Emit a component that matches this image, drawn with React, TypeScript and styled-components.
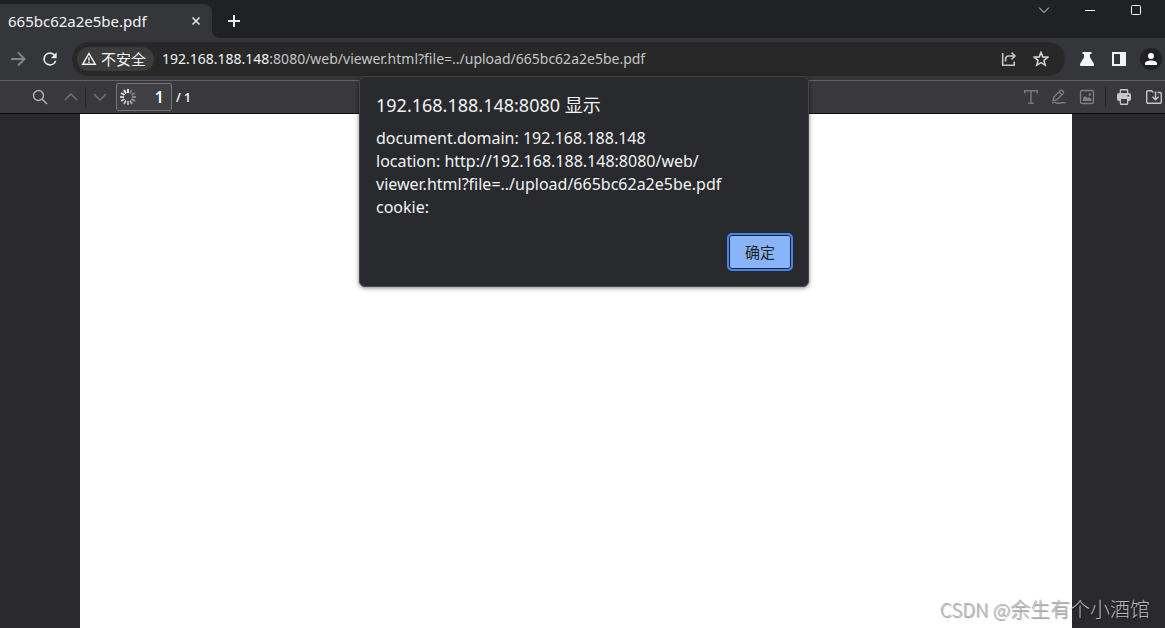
import React from "react";
import styled, { createGlobalStyle } from "styled-components";

const GlobalStyle = createGlobalStyle`
  *, *::before, *::after { box-sizing: border-box; }
  html, body, #root { height: 100%; }
  body {
    margin: 0;
    overflow: hidden;
    background: #2a2a2e;
    color: #f1f3f4;
    font-family: "Noto Sans", "Noto Sans CJK SC", sans-serif;
  }
  button, input { font: inherit; color: inherit; }
  button { border: 0; padding: 0; background: none; }
  svg { display: block; }
`;

const Browser = styled.div`
  position: relative;
  display: flex;
  flex-direction: column;
  min-height: 100%;
`;

const TabStrip = styled.header`
  display: flex;
  height: 38px;
  padding-right: 6px;
  background: #202124;
`;

const Tab = styled.div`
  position: relative;
  display: flex;
  align-items: center;
  justify-content: space-between;
  width: 212px;
  margin-top: 4px;
  padding: 0 8px;
  background: #35363a;
  border-radius: 0 8px 0 0;
  font-size: 15px;

  &::after {
    content: "";
    position: absolute;
    left: 100%;
    bottom: 0;
    width: 8px;
    height: 8px;
    background: radial-gradient(circle at 100% 0, #202124 8px, #35363a 8px);
  }
`;

const IconButton = styled.button<{ $w?: number; $h?: number; $color?: string }>`
  display: flex;
  flex: none;
  align-items: center;
  justify-content: center;
  width: ${(p) => p.$w ?? 28}px;
  height: ${(p) => p.$h ?? 28}px;
  color: ${(p) => p.$color ?? "#e8eaed"};
`;

const NewTab = styled(IconButton)`
  margin: 7px 0 0 8px;
`;

const WindowControls = styled.div`
  display: flex;
  margin-left: auto;
`;

const AddressBar = styled.div`
  display: flex;
  align-items: center;
  height: 42px;
  padding: 0 3px 0 4px;
  background: #35363a;
`;

const Omnibox = styled.div`
  display: flex;
  flex: 1;
  align-items: center;
  min-width: 0;
  height: 34px;
  margin: 0 11px 0 4px;
  padding: 0 8px 0 5px;
  background: #282828;
  border-radius: 17px;
`;

const SecurityChip = styled.button`
  display: flex;
  flex: none;
  align-items: center;
  gap: 4px;
  width: 77px;
  height: 24px;
  padding-left: 4px;
  border-radius: 12px;
  background: #3c3c3c;
  font-size: 15px;
  line-height: 24px;
  white-space: nowrap;
`;

const Url = styled.div`
  flex: 1;
  min-width: 0;
  margin-left: 8px;
  overflow: hidden;
  color: #c3c5c8;
  font-size: 14px;
  line-height: 24px;
  white-space: nowrap;
`;

const UrlHost = styled.span`
  color: #f1f3f4;
`;

const Extensions = styled.div`
  display: flex;
  gap: 10px;
`;

const Avatar = styled(IconButton)`
  border-radius: 50%;
  background: #202124;
`;

const PdfToolbar = styled.div`
  display: flex;
  align-items: center;
  justify-content: space-between;
  height: 34px;
  padding-left: 26px;
  border-top: 1px solid #606164;
  border-bottom: 1px solid #0c0c0d;
  background: #38383d;
`;

const ToolGroup = styled.div`
  display: flex;
  align-items: center;
`;

const Separator = styled.span<{ $gap?: number }>`
  width: 1px;
  height: 20px;
  margin: 0 ${(p) => p.$gap ?? 0}px;
  background: #242428;
`;

const PageField = styled.label`
  position: relative;
  display: block;
  margin: 0 4px 0 2px;
`;

const PageInput = styled.input`
  display: block;
  width: 56px;
  height: 28px;
  padding: 0 7px;
  border: 1px solid #737377;
  border-radius: 2px;
  background: #404045;
  color: #f9f9fa;
  font-size: 16px;
  font-weight: 600;
  text-align: right;
`;

const Loading = styled.span`
  position: absolute;
  top: 6px;
  left: 4px;
`;

const PageCount = styled.span`
  font-size: 12px;
  font-weight: 600;
`;

const Viewer = styled.main`
  display: flex;
  flex: 1;
  padding: 0 93px 0 80px;
  background: #2a2a2e;
`;

const Page = styled.div`
  flex: 1;
  background: #fff;
`;

const Overlay = styled.div`
  position: absolute;
  top: 76px;
  left: 3px;
  right: 0;
  display: flex;
  justify-content: center;
`;

const Dialog = styled.section`
  display: flex;
  flex-direction: column;
  width: 450px;
  padding: 16px 15px 15px 16px;
  border: 1px solid #454649;
  border-radius: 6px;
  background: #292a2d;
  box-shadow: 0 1px 4px rgba(0, 0, 0, 0.5);
`;

const DialogTitle = styled.h1`
  margin: 0 0 10px;
  font-size: 18px;
  font-weight: 400;
  line-height: 24px;
`;

const DialogText = styled.p`
  margin: 0 0 14px;
  font-size: 16px;
  line-height: 23px;
`;

const OkButton = styled.button`
  align-self: flex-end;
  width: 66px;
  height: 38px;
  padding-bottom: 2px;
  border: 2px solid #4285f4;
  border-radius: 5px;
  background: #8ab4f8;
  box-shadow: inset 0 0 0 1px #202124;
  color: #202124;
  font-size: 15px;
`;

const Watermark = styled.div`
  position: absolute;
  right: 15px;
  bottom: 4px;
  color: #b8b8b8;
  font-family: "Noto Sans CJK SC", sans-serif;
  font-size: 20px;
  font-weight: 300;
  line-height: 30px;
  text-shadow: 1px 1px 1px rgba(0, 0, 0, 0.4);
  white-space: nowrap;
`;

const WatermarkBrand = styled.span`
  font-size: 19px;
`;

const SaveButton = styled(IconButton)`
  margin-left: 5px;
`;

type IconProps = { size?: number; children: React.ReactNode; box?: number; width?: number };

const Stroke = ({ size = 16, box = 16, width = 1, children }: IconProps) => (
  <svg width={size} height={size} viewBox={`0 0 ${box} ${box}`} fill="none" stroke="currentColor" strokeWidth={width} aria-hidden="true">
    {children}
  </svg>
);

const spokes = Array.from({ length: 12 }, (_, i) => i);

export default function App() {
  return (
    <>
      <GlobalStyle />
      <Browser>
        <TabStrip>
          <Tab>
            <span>665bc62a2e5be.pdf</span>
            <IconButton $w={16} $h={16} aria-label="Close tab">
              <Stroke width={1.5}><path d="M4.5 4.5l7 7M11.5 4.5l-7 7" /></Stroke>
            </IconButton>
          </Tab>
          <NewTab aria-label="New tab">
            <Stroke width={2}><path d="M8 2v12M2 8h12" /></Stroke>
          </NewTab>
          <WindowControls>
            <IconButton $w={46} $h={20} aria-label="Search tabs">
              <Stroke><path d="M3 5.5l5 5 5-5" /></Stroke>
            </IconButton>
            <IconButton $w={46} $h={20} $color="#fff" aria-label="Minimize">
              <Stroke><path d="M3 8.5h10" /></Stroke>
            </IconButton>
            <IconButton $w={46} $h={20} $color="#fff" aria-label="Maximize">
              <Stroke><rect x="3.5" y="3.5" width="9" height="9" rx="1" /></Stroke>
            </IconButton>
          </WindowControls>
        </TabStrip>

        <AddressBar>
          <IconButton $color="#828386" aria-label="Forward">
            <Stroke width={2}><path d="M1 8h13M8 1.5L14.5 8 8 14.5" /></Stroke>
          </IconButton>
          <IconButton $w={36} aria-label="Reload">
            <svg width="20" height="20" viewBox="0 0 24 24" fill="currentColor" aria-hidden="true">
              <path d="M17.65 6.35A7.96 7.96 0 0 0 12 4a8 8 0 1 0 7.73 10h-2.08A6 6 0 1 1 12 6c1.66 0 3.14.69 4.22 1.78L13 11h7V4z" />
            </svg>
          </IconButton>
          <Omnibox>
            <SecurityChip>
              <Stroke width={1.4}><path d="M8 2.5L14.3 13.3H1.7z" /><path d="M8 6.3v3.4M8 10.6v1.4" /></Stroke>
              不安全
            </SecurityChip>
            <Url><UrlHost>192.168.188.148</UrlHost>:8080/web/viewer.html?file=../upload/665bc62a2e5be.pdf</Url>
            <IconButton $w={32} $color="#c4c5c7" aria-label="Share">
              <Stroke width={1.6}><path d="M1.7 2v12.3h11.5V10.5M4.6 10.5V8q0-3 3-3h6M10.5 1.6L14 5l-3.5 3.4" /></Stroke>
            </IconButton>
            <IconButton $w={32} $color="#d0d1d3" aria-label="Bookmark">
              <Stroke width={1.6}><path d="M8 1.5l1.8 4.4 4.9.4-3.7 3.1 1.2 4.7L8 11.6l-4.2 2.5L5 9.4 1.3 6.3l4.9-.4z" /></Stroke>
            </IconButton>
          </Omnibox>
          <Extensions>
            <IconButton $w={22} $h={22} $color="#f1f3f4" aria-label="Labs">
              <svg width="16" height="16" viewBox="0 0 16 16" fill="currentColor" aria-hidden="true">
                <path d="M3.5 1h9v2H11v3.2l4 6.8q.6 2-1 2H2q-1.6 0-1-2l4-6.8V3H3.5z" />
              </svg>
            </IconButton>
            <IconButton $w={22} $h={22} $color="#f1f3f4" aria-label="Side panel">
              <svg width="16" height="16" viewBox="0 0 16 16" fill="currentColor" fillRule="evenodd" aria-hidden="true">
                <path d="M1 1h14v14H1zM3 3v10h6V3z" />
              </svg>
            </IconButton>
            <Avatar $w={22} $h={22} $color="#fff" aria-label="Profile">
              <svg width="14" height="14" viewBox="0 0 14 14" fill="currentColor" aria-hidden="true">
                <circle cx="7" cy="4" r="3" />
                <path d="M1 13v-1.5C1 9.5 4 8.5 7 8.5s6 1 6 3V13z" />
              </svg>
            </Avatar>
          </Extensions>
        </AddressBar>

        <PdfToolbar>
          <ToolGroup>
            <IconButton $color="#b4b4b8" aria-label="Find">
              <Stroke width={1.4}><circle cx="6.5" cy="6.5" r="5" /><path d="M10.2 10.2l4.8 4.8" /></Stroke>
            </IconButton>
            <IconButton $w={31} $color="#77777b" aria-label="Previous page">
              <Stroke width={1.3}><path d="M3 11l6-6 6 6" /></Stroke>
            </IconButton>
            <Separator />
            <IconButton $color="#77777b" aria-label="Next page">
              <Stroke width={1.3}><path d="M2 5l6 6 6-6" /></Stroke>
            </IconButton>
            <PageField>
              <Loading>
                <svg width="16" height="16" viewBox="-8 -8 16 16" stroke="#fff" strokeWidth="1.8" aria-hidden="true">
                  {spokes.map((i) => (
                    <path key={i} d="M0 -4v-4" transform={`rotate(${-30 * i})`} opacity={1 - i * 0.065} />
                  ))}
                </svg>
              </Loading>
              <PageInput aria-label="Page" defaultValue="1" />
            </PageField>
            <PageCount>/ 1</PageCount>
          </ToolGroup>
          <ToolGroup>
            <IconButton $color="#77777b" aria-label="Text">
              <Stroke width={1.5}><path d="M1.7 4.5V1.7h12.6v2.8M8 1.7v12.6M5 14.3h6" /></Stroke>
            </IconButton>
            <IconButton $color="#808084" aria-label="Draw">
              <Stroke width={1.3}>
                <path d="M2 11.5l.8-3.5 6.400-6.300q1.200-1 2.300 0l.6.6q1 1.200 0 2.300L5.700 11zM8 3l2.900 2.900" />
                <path d="M1 14.200c2-1.500 3-1.200 4-.5s2 .8 4 .3 4-.8 6 0" />
              </Stroke>
            </IconButton>
            <IconButton $color="#808084" aria-label="Image">
              <Stroke width={1.3}>
                <rect x="1.500" y="1.500" width="13" height="13" rx="1.500" />
                <path d="M4 12V9l2-2 2.500 2L10 8l2.500 2v2z" fill="currentColor" stroke="none" />
                <circle cx="10.800" cy="5.500" r="1.200" fill="currentColor" stroke="none" />
              </Stroke>
            </IconButton>
            <Separator $gap={4} />
            <IconButton $color="#c6c6c9" aria-label="Print">
              <svg width="16" height="16" viewBox="0 0 16 16" fill="currentColor" fillRule="evenodd" aria-hidden="true">
                <path d="M5 0h6q1.300 0 1.300 1.300V4H13q2 0 2 2v4q0 2-2 2h-.7v2.500q0 1.500-1.500 1.500H5.200q-1.500 0-1.500-1.500V12H3q-2 0-2-2V6q0-2 2-2h.7V1.300Q3.700 0 5 0zM5 1.500V4h6V1.500zM5 10v4.500h6V10zM11.500 6v1.500H13V6z" />
              </svg>
            </IconButton>
            <SaveButton $color="#c6c6c9" $w={22} aria-label="Save">
              <Stroke width={1.4}>
                <path d="M5.500 14.300H2q-1.300 0-1.300-1.300V3Q.7 1.700 2 1.700h3.500L7.300 3.500M11.500 3.500H14q1.300 0 1.300 1.300V13q0 1.300-1.300 1.300H5" />
                <path d="M9.500 2.500v8M6.500 7.700l3 3 3-3" />
              </Stroke>
            </SaveButton>
          </ToolGroup>
        </PdfToolbar>

        <Viewer><Page /></Viewer>

        <Overlay>
          <Dialog role="alertdialog" aria-labelledby="dialog-title">
            <DialogTitle id="dialog-title">192.168.188.148:8080 显示</DialogTitle>
            <DialogText>
              document.domain: 192.168.188.148<br />
              location: http://192.168.188.148:8080/web/<br />
              viewer.html?file=../upload/665bc62a2e5be.pdf<br />
              cookie:
            </DialogText>
            <OkButton>确定</OkButton>
          </Dialog>
        </Overlay>
        <Watermark><WatermarkBrand>CSDN @</WatermarkBrand>余生有个小酒馆</Watermark>
      </Browser>
    </>
  );
}
